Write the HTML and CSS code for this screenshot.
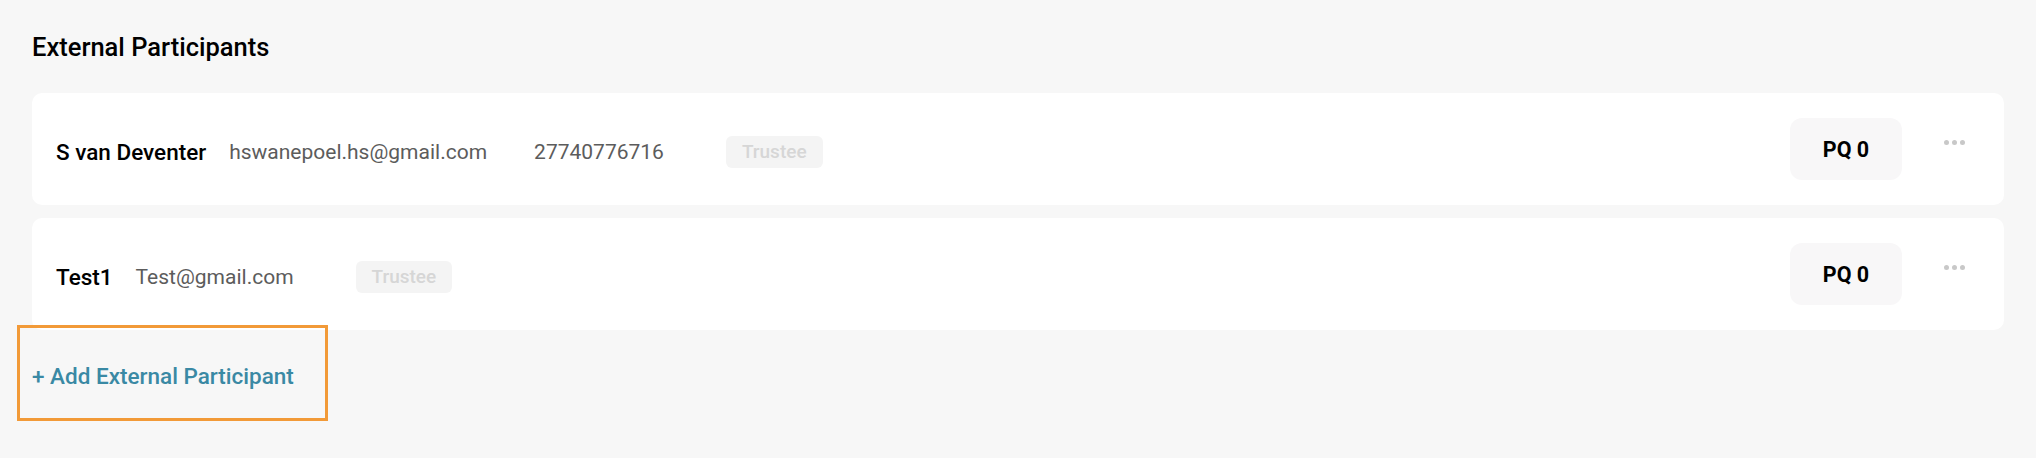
FILE: index.html
```html
<!DOCTYPE html>
<html lang="en">
<head>
    <meta charset="UTF-8">
    <meta name="viewport" content="width=device-width, initial-scale=1.0">
    <title>External Participants</title>
    <link rel="stylesheet" href="styles.css">
</head>
<body>
    <div class="page">
        <h2 class="section-title">External Participants</h2>

        <div class="participant-list">
            <div class="participant-card">
                <div class="info">
                    <span class="name">S van Deventer</span>
                    <div class="contact">
                        <span>hswanepoel.hs@gmail.com</span>
                        <span>27740776716</span>
                    </div>
                    <span class="badge">Trustee</span>
                </div>
                <div class="actions">
                    <button class="pq-button">PQ 0</button>
                    <div class="more"><i></i><i></i><i></i></div>
                </div>
            </div>

            <div class="participant-card">
                <div class="info">
                    <span class="name">Test1</span>
                    <div class="contact">
                        <span>Test@gmail.com</span>
                    </div>
                    <span class="badge">Trustee</span>
                </div>
                <div class="actions">
                    <button class="pq-button">PQ 0</button>
                    <div class="more"><i></i><i></i><i></i></div>
                </div>
            </div>
        </div>

        <div class="add-row">
            <a class="add-link" href="#">+ Add External Participant</a>
            <div class="highlight"></div>
        </div>
    </div>
</body>
</html>
```

FILE: styles.css
```css
* {
    margin: 0;
    padding: 0;
    box-sizing: border-box;
    font-family: Roboto, 'Liberation Sans', sans-serif;
}

body {
    background: #f7f7f7;
    color: #000;
    min-height: 100vh;
}

.page {
    padding: 31px 32px 0 32px;
}

.section-title {
    font-size: 25.5px;
    font-weight: 500;
    line-height: 32px;
    color: #000;
    margin-bottom: 30px;
}

.participant-list {
    display: flex;
    flex-direction: column;
    gap: 13px;
}

.participant-card {
    background: #fff;
    border-radius: 10px;
    height: 112px;
    padding: 0 39px 0 24px;
    display: flex;
    align-items: center;
}

.info {
    display: flex;
    align-items: center;
    gap: 23px;
    padding-top: 6px;
}

.name {
    font-size: 22.5px;
    font-weight: 500;
    color: #000;
}

.contact {
    display: flex;
    gap: 47px;
    font-size: 21px;
    color: #5c5c5c;
}

.badge {
    margin-left: 39px;
    background: #f4f4f4;
    color: #d6d6d6;
    font-size: 19px;
    font-weight: 500;
    height: 32px;
    line-height: 32px;
    padding: 0 16px;
    border-radius: 6px;
}

.actions {
    margin-left: auto;
    display: flex;
    align-items: flex-start;
    gap: 42px;
}

.pq-button {
    width: 112px;
    height: 62px;
    border: none;
    border-radius: 12px;
    background: #f8f7f8;
    font-size: 21.5px;
    font-weight: 700;
    color: #000;
    cursor: pointer;
}

.more {
    display: flex;
    gap: 3px;
    margin-top: 22px;
}

.more i {
    width: 5px;
    height: 5px;
    border-radius: 50%;
    background: #c8c8c8;
}

.add-row {
    position: relative;
    margin-top: 31px;
}

.add-link {
    font-size: 22.5px;
    font-weight: 500;
    line-height: 30px;
    color: #3a89a4;
    text-decoration: none;
}

/* orange annotation frame around the link */
.highlight {
    position: absolute;
    left: -15px;
    top: -36px;
    width: 311px;
    height: 96px;
    border: 3px solid #f29a38;
    pointer-events: none;
}
```
